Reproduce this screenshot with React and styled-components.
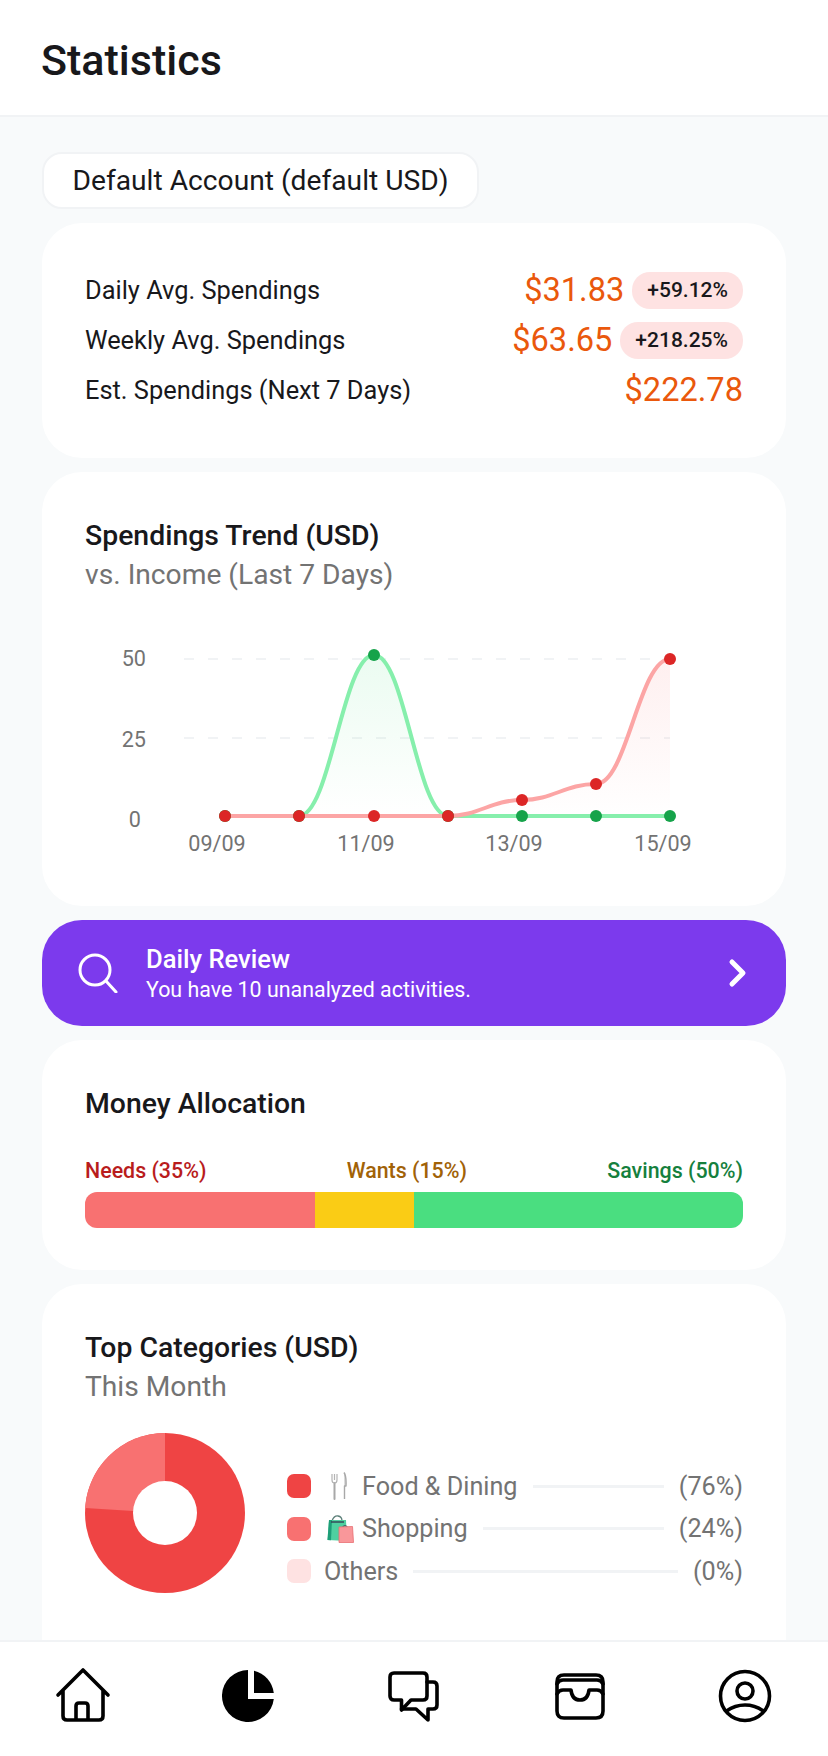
import React from 'react';
import styled, { createGlobalStyle } from 'styled-components';

const GlobalStyle = createGlobalStyle`
  html, body {
    margin: 0;
    padding: 0;
    background: #f8fafb;
    font-family: Roboto, "Liberation Sans", sans-serif;
  }
`

const Screen = styled.div`
  position: relative;
  width: 828px;
  height: 1756px;
  overflow: hidden;
  background: #f8fafb;
`

const Header = styled.header`
  height: 117px;
  box-sizing: border-box;
  padding-left: 41px;
  display: flex;
  align-items: center;
  background: #fff;
  border-bottom: 2px solid #f1f3f5;
`

const Title = styled.h1`
  margin: 4px 0 0;
  font-size: 43px;
  font-weight: 500;
  color: #18181b;
`

const Content = styled.main`
  padding: 35px 42px 0;
  display: flex;
  flex-direction: column;
  align-items: stretch;
  gap: 14px;
`

const AccountPill = styled.div`
  align-self: flex-start;
  box-sizing: border-box;
  height: 57px;
  padding: 0 28.5px;
  display: flex;
  align-items: center;
  background: #fff;
  border: 2px solid #f1f3f5;
  border-radius: 20px;
  font-size: 28.2px;
  color: #18181b;
`

const Card = styled.section`
  background: #fff;
  border-radius: 40px;
  padding: 42px 43px;
  height: ${(p) => p.$height || 'auto'};
  box-sizing: border-box;
`

const TitledCard = styled(Card)`
  padding-top: 44px;
`

const StatRow = styled.div`
  height: 50px;
  display: flex;
  align-items: center;
  justify-content: space-between;
`

const StatLabel = styled.span`
  font-size: 25.4px;
  color: #18181b;
`

const StatValues = styled.div`
  display: flex;
  align-items: center;
  gap: 8px;
`

const StatAmount = styled.span`
  font-size: 32.6px;
  color: #ea580c;
`

const Badge = styled.span`
  height: 37px;
  padding: 0 15px;
  display: flex;
  align-items: center;
  background: #fee2e2;
  border-radius: 18px;
  font-size: 21px;
  font-weight: 500;
  color: #18181b;
`

const CardTitle = styled.h2`
  margin: 0;
  font-size: 28.4px;
  line-height: 39px;
  font-weight: 500;
  color: #18181b;
`

const CardSubtitle = styled.p`
  margin: 0;
  font-size: 28.2px;
  line-height: 39px;
  color: #737373;
`

const ChartFrame = styled.svg`
  display: block;
  margin: 6px 0 0 -43px;
`

const AxisText = styled.text`
  font-family: Roboto, sans-serif;
  font-size: 21.6px;
  fill: #737373;
`

const ReviewBanner = styled.div`
  height: 106px;
  display: flex;
  align-items: center;
  padding: 0 38px 0 36px;
  background: #7c3aed;
  border-radius: 40px;
  color: #fff;
`

const ReviewText = styled.div`
  flex: 1;
  margin-left: 28px;
  padding-top: 2px;
`

const ReviewTitle = styled.div`
  font-size: 25.6px;
  line-height: 31px;
  font-weight: 500;
`

const ReviewSub = styled.div`
  font-size: 21.4px;
  line-height: 30px;
`

const AllocationLabels = styled.div`
  display: flex;
  justify-content: space-between;
  margin-top: 34px;
`

const AllocationLabel = styled.span`
  font-size: 21.4px;
  line-height: 28px;
  font-weight: 500;
  color: ${(p) => p.$color};
`

const AllocationBar = styled.div`
  display: flex;
  height: 36px;
  margin-top: 7px;
  border-radius: 12px;
  overflow: hidden;
`

const AllocationPart = styled.div`
  background: ${(p) => p.$color};
  width: ${(p) => p.$width}%;
`

const CategoryBody = styled.div`
  display: flex;
  align-items: flex-start;
  margin-top: 27px;
`

const DonutChart = styled.svg`
  flex: none;
`

const Legend = styled.div`
  flex: 1;
  margin: 32px 0 0 42px;
  display: flex;
  flex-direction: column;
`

const LegendRow = styled.div`
  height: 42.5px;
  display: flex;
  align-items: center;
`

const Swatch = styled.span`
  width: 24px;
  height: 24px;
  flex: none;
  border-radius: 7px;
  background: ${(p) => p.$color};
  margin-right: 13px;
`

const EmojiSlot = styled.span`
  display: flex;
  align-items: center;
  width: 38px;
  flex: none;
  padding-left: ${(p) => p.$inset}px;
  box-sizing: border-box;
`

const LegendName = styled.span`
  font-size: 25.2px;
  color: #737373;
  white-space: nowrap;
`

const LegendLine = styled.span`
  flex: 1;
  height: 3px;
  margin: 0 15px;
  background: #f1f3f5;
`

const LegendPct = styled.span`
  font-size: 25.2px;
  color: #737373;
`

const BottomNav = styled.nav`
  position: absolute;
  left: 0;
  right: 0;
  bottom: 0;
  height: 116px;
  box-sizing: border-box;
  display: flex;
  padding-bottom: 8px;
  background: #fff;
  border-top: 2px solid #f1f3f5;
`

const NavItem = styled.div`
  flex: 1;
  display: flex;
  align-items: center;
  justify-content: center;
`

const NavIcon = styled.svg`
  width: 56px;
  height: 56px;
  fill: none;
  stroke: #000;
  stroke-width: 3.6;
  stroke-linecap: round;
  stroke-linejoin: round;
`

const xs = [225, 299, 374, 448, 522, 596, 670]
const smooth = (pts) => {
  let d = `M${pts[0][0]} ${pts[0][1]}`
  for (let i = 1; i < pts.length; i++) {
    const [x0, y0] = pts[i - 1]
    const [x1, y1] = pts[i]
    const k = (x1 - x0) * 0.42
    d += ` C${x0 + k} ${y0} ${x1 - k} ${y1} ${x1} ${y1}`
  }
  return d
}

// chart coordinates are page x, and y measured from the svg top at 600
const toY = (y) => y - 600
const incomeY = [816, 816, 655, 816, 816, 816, 816]
const spendY = [816, 816, 816, 816, 800, 784, 659]
const incomePts = xs.map((x, i) => [x, toY(incomeY[i])])
const spendPts = xs.map((x, i) => [x, toY(spendY[i])])

const TrendChart = () => {
  const income = smooth(incomePts)
  const spend = smooth(spendPts)
  const base = toY(816)
  return (
    <ChartFrame width="744" height="270" viewBox="42 0 744 270">
      <defs>
        <linearGradient id="incomeFill" x1="0" y1="0" x2="0" y2="1">
          <stop offset="0" stopColor="#4ade80" stopOpacity="0.11" />
          <stop offset="1" stopColor="#4ade80" stopOpacity="0" />
        </linearGradient>
        <linearGradient id="spendFill" x1="0" y1="0" x2="0" y2="1">
          <stop offset="0" stopColor="#f87171" stopOpacity="0.11" />
          <stop offset="1" stopColor="#f87171" stopOpacity="0" />
        </linearGradient>
      </defs>
      {[59, 138].map((y) => (
        <line key={y} x1="184" x2="670" y1={y} y2={y} stroke="#f1f3f5" strokeWidth="2" strokeDasharray="10 14" />
      ))}
      <path d={`${income} L670 ${base} L225 ${base} Z`} fill="url(#incomeFill)" />
      <path d={`${spend} L670 ${base} L225 ${base} Z`} fill="url(#spendFill)" />
      <path d={income} fill="none" stroke="#86efac" strokeWidth="4" />
      <path d={spend} fill="none" stroke="#fca5a5" strokeWidth="4" />
      {incomePts.map(([x, y]) => (
        <circle key={x} cx={x} cy={y} r="6" fill="#16a34a" />
      ))}
      {spendPts.map(([x, y]) => (
        <circle key={x} cx={x} cy={y} r="6" fill="#dc2626" />
      ))}
      <AxisText x="146" y="66" textAnchor="end">50</AxisText>
      <AxisText x="146" y="147" textAnchor="end">25</AxisText>
      <AxisText x="141" y="227" textAnchor="end">0</AxisText>
      {[[217, '09/09'], [366, '11/09'], [514, '13/09'], [663, '15/09']].map(([x, t]) => (
        <AxisText key={t} x={x} y="251" textAnchor="middle">{t}</AxisText>
      ))}
    </ChartFrame>
  )
}

const Donut = () => (
  <DonutChart width="160" height="160" viewBox="0 0 160 160">
    <circle cx="80" cy="80" r="80" fill="#ef4444" />
    <path d="M80 80 L80 0 A80 80 0 0 0 0.15 75 Z" fill="#f87171" />
    <circle cx="80" cy="80" r="32" fill="#fff" />
  </DonutChart>
)

const ForkKnife = () => (
  <svg width="16" height="28" viewBox="0 0 16 28">
    <path d="M3.5 11 V27" stroke="#a8a8a8" strokeWidth="2" strokeLinecap="round" />
    <path d="M1 2 V8 Q1 11 3.5 11 Q6 11 6 8 V2 M3.5 2 V8" fill="none" stroke="#b4b4b4" strokeWidth="1.2" />
    <path d="M13 0.5 Q15.5 4 15 14 L13.5 14 V27" fill="#d4d4d4" stroke="#a8a8a8" strokeWidth="1.4" strokeLinejoin="round" />
  </svg>
)

const Bags = () => (
  <svg width="27" height="28" viewBox="0 0 27 28">
    <path d="M5 6 Q7 0.5 11 1 Q15 1.5 15 6" fill="none" stroke="#5b7f78" strokeWidth="1.3" />
    <path d="M2 5 L19 5 L20 26 L0.5 25 Z" fill="#4fd0a0" />
    <path d="M0.5 25 L2 5 L5 5 L4 25.2 Z" fill="#1e9e78" />
    <path d="M4 7 H17" stroke="#334155" strokeWidth="1.4" />
    <path d="M15 13 Q18 8 21 13" fill="none" stroke="#475569" strokeWidth="1.2" />
    <path d="M12 12 L25.5 11.5 L26.5 27.5 L12 27.5 Z" fill="#f9979a" stroke="#e96f72" strokeWidth="0.8" />
  </svg>
)

const App = () => {
  return (
    <Screen>
      <GlobalStyle />
      <Header>
        <Title>Statistics</Title>
      </Header>
      <Content>
        <AccountPill>Default Account (default USD)</AccountPill>
        <Card $height="235px">
          <StatRow>
            <StatLabel>Daily Avg. Spendings</StatLabel>
            <StatValues>
              <StatAmount>$31.83</StatAmount>
              <Badge>+59.12%</Badge>
            </StatValues>
          </StatRow>
          <StatRow>
            <StatLabel>Weekly Avg. Spendings</StatLabel>
            <StatValues>
              <StatAmount>$63.65</StatAmount>
              <Badge>+218.25%</Badge>
            </StatValues>
          </StatRow>
          <StatRow>
            <StatLabel>Est. Spendings (Next 7 Days)</StatLabel>
            <StatValues>
              <StatAmount>$222.78</StatAmount>
            </StatValues>
          </StatRow>
        </Card>
        <TitledCard $height="434px">
          <CardTitle>Spendings Trend (USD)</CardTitle>
          <CardSubtitle>vs. Income (Last 7 Days)</CardSubtitle>
          <TrendChart />
        </TitledCard>
        <ReviewBanner>
          <svg width="40" height="40" viewBox="0 0 40 40" fill="none" stroke="#fff" strokeWidth="3" strokeLinecap="round">
            <circle cx="17" cy="17" r="15" />
            <path d="M28 28 L38 39" />
          </svg>
          <ReviewText>
            <ReviewTitle>Daily Review</ReviewTitle>
            <ReviewSub>You have 10 unanalyzed activities.</ReviewSub>
          </ReviewText>
          <svg width="20" height="30" viewBox="0 0 20 30" fill="none" stroke="#fff" strokeWidth="5" strokeLinecap="round" strokeLinejoin="round">
            <path d="M4 4 L15 15 L4 26" />
          </svg>
        </ReviewBanner>
        <TitledCard $height="230px">
          <CardTitle>Money Allocation</CardTitle>
          <AllocationLabels>
            <AllocationLabel $color="#b91c1c">Needs (35%)</AllocationLabel>
            <AllocationLabel $color="#a16207">Wants (15%)</AllocationLabel>
            <AllocationLabel $color="#15803d">Savings (50%)</AllocationLabel>
          </AllocationLabels>
          <AllocationBar>
            <AllocationPart $color="#f87171" $width={35} />
            <AllocationPart $color="#facc15" $width={15} />
            <AllocationPart $color="#4ade80" $width={50} />
          </AllocationBar>
        </TitledCard>
        <TitledCard $height="500px">
          <CardTitle>Top Categories (USD)</CardTitle>
          <CardSubtitle>This Month</CardSubtitle>
          <CategoryBody>
            <Donut />
            <Legend>
              <LegendRow>
                <Swatch $color="#ef4444" />
                <EmojiSlot $inset={7}><ForkKnife /></EmojiSlot>
                <LegendName>Food & Dining</LegendName>
                <LegendLine />
                <LegendPct>(76%)</LegendPct>
              </LegendRow>
              <LegendRow>
                <Swatch $color="#f87171" />
                <EmojiSlot $inset={3}><Bags /></EmojiSlot>
                <LegendName>Shopping</LegendName>
                <LegendLine />
                <LegendPct>(24%)</LegendPct>
              </LegendRow>
              <LegendRow>
                <Swatch $color="#fee2e2" />
                <LegendName>Others</LegendName>
                <LegendLine />
                <LegendPct>(0%)</LegendPct>
              </LegendRow>
            </Legend>
          </CategoryBody>
        </TitledCard>
      </Content>
      <BottomNav>
        <NavItem>
          <NavIcon viewBox="0 0 56 56">
            <path d="M3 28 L28 3 L53 28 M8 23 V49 Q8 53 12 53 H44 Q48 53 48 49 V23 M21 53 V39 Q21 36 24 36 H30 Q33 36 33 39 V53" />
          </NavIcon>
        </NavItem>
        <NavItem>
          <NavIcon viewBox="0 0 56 56">
            <path d="M28 3 A26 26 0 1 0 53.8 32 L28 32 Z" fill="#000" stroke="none" />
            <path d="M34 3.7 A26 26 0 0 1 53.8 26 H34 Z" fill="#000" stroke="none" />
          </NavIcon>
        </NavItem>
        <NavItem>
          <NavIcon viewBox="0 0 56 56">
            <path d="M8 6 H37 Q41 6 41 10 V29 Q41 33 37 33 H25 L15.5 43 V33 H8 Q4 33 4 29 V10 Q4 6 8 6 Z" />
            <path d="M41 15 H47 Q51 15 51 19 V38 Q51 42 47 42 H42 V53 L30 42 H15.5" />
          </NavIcon>
        </NavItem>
        <NavItem>
          <NavIcon viewBox="0 0 56 56">
            <path d="M12 8 H44 Q51 8 51 15 V44 Q51 51 44 51 H12 Q5 51 5 44 V15 Q5 8 12 8 Z" />
            <path d="M5 17 Q7 13 11 13 H45 Q49 13 51 17 M5 27 Q7 23 11 23 H19 Q20 33 28 33 Q36 33 37 23 H45 Q49 23 51 27" />
          </NavIcon>
        </NavItem>
        <NavItem>
          <NavIcon viewBox="0 0 56 56">
            <circle cx="28" cy="29" r="24.5" />
            <circle cx="28" cy="24" r="8" />
            <path d="M9.5 44 Q18 38 28 38 Q38 38 46.5 44" />
          </NavIcon>
        </NavItem>
      </BottomNav>
    </Screen>
  )
}

export default App
